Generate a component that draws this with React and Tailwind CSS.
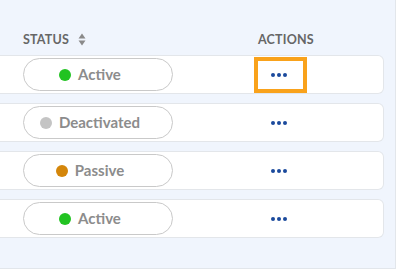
import React from 'react';

const rows = [
    { label: 'Active', dot: 'bg-[#22c322]', focused: true },
    { label: 'Deactivated', dot: 'bg-[#c4c4c4]' },
    { label: 'Passive', dot: 'bg-[#d4860a]' },
    { label: 'Active', dot: 'bg-[#22c322]' },
];

const SortIcon = () => (
    <svg width="8" height="13" viewBox="0 0 8 13" className="ml-[9px]">
        <path d="M4 0.5 L7.5 5.5 L0.5 5.5 Z" fill="#8a8a8a" />
        <path d="M4 12.5 L7.5 7.5 L0.5 7.5 Z" fill="#8a8a8a" />
    </svg>
);

const Dots = () => (
    <div className="flex items-center gap-[2px] pr-[3px] pt-[1px]">
        <span className="w-[4px] h-[4px] rounded-full bg-[#1b4a9c]" />
        <span className="w-[4px] h-[4px] rounded-full bg-[#1b4a9c]" />
        <span className="w-[4px] h-[4px] rounded-full bg-[#1b4a9c]" />
    </div>
);

export default function App() {
    return (
        <div className="w-[396px] h-[269px] bg-[#f0f5fd] border-r border-b border-[#e2e6eb] font-['Lato',sans-serif] overflow-hidden">
            {/* header */}
            <div className="h-[55px] flex items-end pb-[8px] text-[12.5px] leading-[15px] font-bold text-[#666666] tracking-[0.2px]">
                <div className="w-[258px] pl-[23px] flex items-center">
                    <span>STATUS</span>
                    <SortIcon />
                </div>
                <span>ACTIONS</span>
            </div>

            <div className="flex flex-col gap-[9px]">
                {rows.map((row, idx) => (
                    <div
                        key={idx}
                        className="w-[384px] h-[39px] bg-white border border-l-0 border-[#e3e6ea] rounded-r-[6px] flex items-center"
                    >
                        <div className="ml-[23px] w-[150px] h-[33px] rounded-full border border-[#c9c9c9] flex items-center justify-center pl-[8px] pr-[24px]">
                            <span className={`w-[12px] h-[12px] rounded-full ${row.dot}`} />
                            <span className="ml-[7px] text-[15px] font-bold text-[#8c8c8c]">{row.label}</span>
                        </div>
                        <button
                            className={`ml-[81px] w-[53px] h-[36px] border-4 flex items-center justify-center ${row.focused ? 'border-[#f9a21b]' : 'border-transparent'}`}
                        >
                            <Dots />
                        </button>
                    </div>
                ))}
            </div>
        </div>
    );
}
